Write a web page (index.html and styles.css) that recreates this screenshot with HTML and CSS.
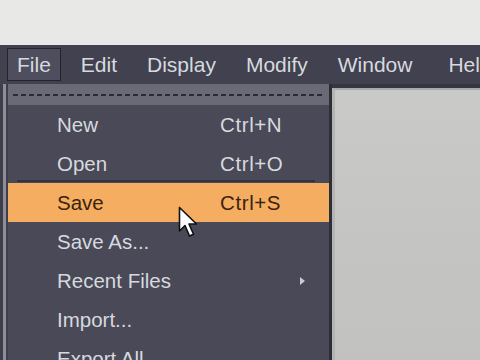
FILE: index.html
```html
<!DOCTYPE html>
<html lang="en">
<head>
    <meta charset="UTF-8">
    <title>File Menu</title>
    <link rel="stylesheet" href="styles.css">
</head>
<body>
    <div class="top"></div>

    <!-- Main menu bar -->
    <div class="menubar">
        <span class="menu-title active">File</span>
        <span class="menu-title">Edit</span>
        <span class="menu-title">Display</span>
        <span class="menu-title">Modify</span>
        <span class="menu-title">Window</span>
        <span class="menu-title help">Help</span>
    </div>

    <div class="workspace">
        <div class="side-strip"><div class="side-line"></div></div>

        <!-- Open File dropdown -->
        <div class="dropdown">
            <div class="tearoff"><div class="dashes"></div></div>
            <div class="item"><span class="label">New</span><span class="shortcut">Ctrl+N</span></div>
            <div class="item divider"><span class="label">Open</span><span class="shortcut">Ctrl+O</span></div>
            <div class="item selected"><span class="label">Save</span><span class="shortcut">Ctrl+S</span></div>
            <div class="item"><span class="label">Save As...</span></div>
            <div class="item"><span class="label">Recent Files</span><span class="submenu-arrow"></span></div>
            <div class="item"><span class="label">Import...</span></div>
            <div class="item"><span class="label">Export All...</span></div>

            <svg class="cursor" width="22" height="34" viewBox="0 0 22 34">
                <path d="M1.5 1.5 L1.5 25 L7 19.5 L11.5 30 L15.5 28.2 L11 18 L18.5 18 Z" fill="#fff" stroke="#111" stroke-width="1.6" stroke-linejoin="round"/>
            </svg>
        </div>

        <div class="edge"></div>
        <div class="panel"></div>
    </div>
</body>
</html>
```

FILE: styles.css
```css
body {
    margin: 0;
    width: 480px;
    height: 360px;
    overflow: hidden;
    background-color: #e8e8e6;
    font-family: "Liberation Sans", Arial, sans-serif;
    font-size: 20.5px;
}

.top {
    height: 45px;
}

.menubar {
    height: 39px;
    background-color: #41414f;
    display: flex;
    align-items: center;
    padding-left: 7px;
    gap: 10px;
    white-space: nowrap;
    font-size: 21px;
}

.menu-title {
    color: #d6dadf;
    padding: 4px 9px 3px;
    border: 1px solid transparent;
}

.menu-title.active {
    background-color: #4e4e5e;
    border-color: #24242e;
}

.menu-title.help {
    margin-left: 6px;
}

.workspace {
    display: flex;
    height: 276px;
    background-color: #363642;
}

.side-strip {
    width: 8px;
    background-color: #3e3e4b;
    padding-left: 3px;
    box-sizing: border-box;
}

.side-line {
    width: 3px;
    height: 100%;
    background-color: #8e8e98;
}

.dropdown {
    position: relative;
    width: 321px;
    background-color: #494957;
}

.tearoff {
    height: 21px;
    background-color: #6a6a77;
    display: flex;
    align-items: center;
    padding: 0 4px 0 5px;
}

.dashes {
    flex: 1;
    height: 2px;
    background: repeating-linear-gradient(to right, #2a2a34 0 5px, transparent 5px 8px);
}

.item {
    height: 39px;
    display: flex;
    align-items: center;
    padding-left: 49px;
    color: #d6dadf;
}

.item.divider {
    background: linear-gradient(#33333e, #33333e) no-repeat 9px 36px / 298px 2px;
}

.item.selected {
    background-color: #f5ad62;
    color: #3a240c;
}

.label {
    width: 163px;
}

.shortcut {
    letter-spacing: 0.6px;
}

.submenu-arrow {
    margin-left: 80px;
    width: 0;
    height: 0;
    border-top: 4px solid transparent;
    border-bottom: 4px solid transparent;
    border-left: 5px solid #c8ccd2;
}

.cursor {
    position: absolute;
    left: 170px;
    top: 122px;
}

.edge {
    width: 3px;
    background-color: #2e2e38;
}

.panel {
    flex: 1;
    margin-top: 4px;
    background: linear-gradient(to bottom, #c9cac8, #c1c2c0);
    border-top: 2px solid #a9aaa8;
    border-left: 3px solid #b4b5b3;
}
```
